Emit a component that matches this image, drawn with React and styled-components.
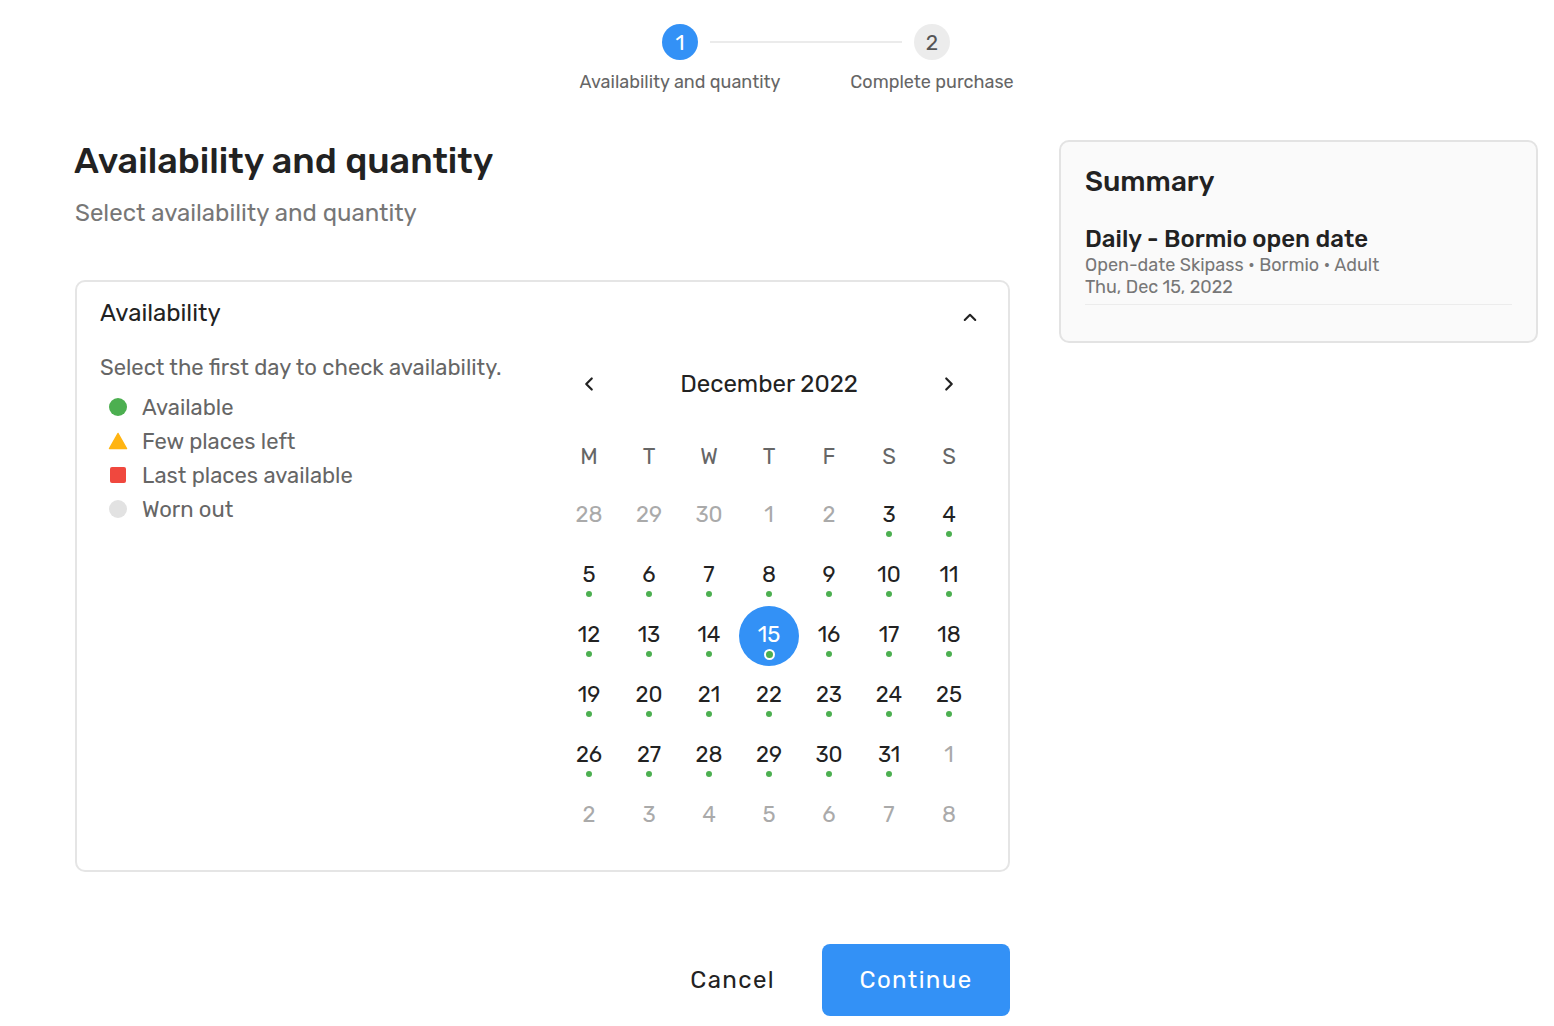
import React from "react";
import styled, { createGlobalStyle } from "styled-components";

const Global = createGlobalStyle`
  * { box-sizing: border-box; }
  body {
    margin: 0;
    background: #fff;
    font-family: Rubik, Inter, "Noto Sans", sans-serif;
    color: #222;
  }
`;

const Page = styled.div`
  width: 1554px;
  padding-top: 24px;
`;

const Stepper = styled.div`
  display: flex;
  margin-left: 554px;
`;

const Step = styled.div`
  width: 252px;
  display: flex;
  flex-direction: column;
  align-items: center;
`;

const Track = styled.div`
  width: 100%;
  display: flex;
  align-items: center;
`;

const Line = styled.div`
  flex: 1;
  height: 2px;
  background: ${(p) => (p.$show ? "#ebebeb" : "transparent")};
  margin: ${(p) => (p.$side === "left" ? "0 12px 0 0" : "0 0 0 12px")};
`;

const Circle = styled.div`
  width: 36px;
  height: 36px;
  border-radius: 50%;
  display: flex;
  align-items: center;
  justify-content: center;
  font-size: 21px;
  background: ${(p) => (p.$active ? "#3391f6" : "#ececec")};
  color: ${(p) => (p.$active ? "#fff" : "#555")};
`;

const StepLabel = styled.div`
  margin-top: 11px;
  font-size: 18px;
  line-height: 22px;
  color: #666;
  white-space: nowrap;
`;

const Main = styled.div`
  display: grid;
  grid-template-columns: 935px 479px;
  column-gap: 49px;
  padding-left: 75px;
  margin-top: 46px;
  align-items: start;
`;

const LeftCol = styled.div`
  display: flex;
  flex-direction: column;
`;

const Title = styled.h1`
  margin: 0 0 0 -1px;
  font-size: 36px;
  line-height: 44px;
  font-weight: 500;
  color: #222;
`;

const Subtitle = styled.div`
  margin-top: 15px;
  font-size: 24px;
  line-height: 30px;
  color: #777;
`;

const Card = styled.div`
  margin-top: 52px;
  border: 2px solid #e5e5e5;
  border-radius: 10px;
  padding: 16px 29px 24px 23px;
`;

const CardHeader = styled.div`
  display: flex;
  align-items: center;
  justify-content: space-between;
  height: 30px;
`;

const CardTitle = styled.div`
  font-size: 24px;
  line-height: 30px;
  color: #222;
`;

const Body = styled.div`
  display: flex;
  margin-top: 26px;
`;

const Legend = styled.div`
  flex: 1;
  display: flex;
  flex-direction: column;
`;

const Hint = styled.div`
  font-size: 22px;
  line-height: 28px;
  color: #666;
  margin-bottom: 8px;
`;

const LegendRow = styled.div`
  display: flex;
  align-items: center;
  height: 34px;
  padding-left: 8px;
  font-size: 22px;
  color: #666;
`;

const IconBox = styled.span`
  width: 20px;
  height: 20px;
  display: flex;
  align-items: center;
  justify-content: center;
  margin-right: 14px;
`;

const Dot = styled.span`
  width: 18px;
  height: 18px;
  border-radius: 50%;
  background: ${(p) => p.$color};
`;

const Square = styled.span`
  width: 16px;
  height: 16px;
  border-radius: 2px;
  background: #f0483e;
`;

const Calendar = styled.div`
  width: 420px;
  display: flex;
  flex-direction: column;
`;

const CalHeader = styled.div`
  display: grid;
  grid-template-columns: 60px 1fr 60px;
  align-items: center;
  height: 44px;
  margin-top: 8px;
`;

const NavBtn = styled.button`
  border: 0;
  background: none;
  padding: 0;
  display: flex;
  align-items: center;
  justify-content: center;
  color: #222;
  cursor: pointer;
  margin-top: ${(p) => p.$offset || 0}px;
`;

const Month = styled.div`
  text-align: center;
  font-size: 24px;
  color: #222;
`;

const Grid = styled.div`
  display: grid;
  grid-template-columns: repeat(7, 60px);
  grid-auto-rows: 60px;
  margin-top: 20px;
`;

const Weekday = styled.div`
  display: flex;
  align-items: center;
  justify-content: center;
  font-size: 22px;
  color: #666;
`;

const DayCell = styled.div`
  display: flex;
  flex-direction: column;
  align-items: center;
  padding-top: 17px;
  border-radius: 50%;
  background: ${(p) => (p.$selected ? "#3391f6" : "transparent")};
  color: ${(p) => (p.$selected ? "#fff" : p.$muted ? "#aaa" : "#222")};
`;

const DayNum = styled.span`
  font-size: 22px;
  line-height: 24px;
`;

const AvailDot = styled.span`
  margin-top: ${(p) => (p.$selected ? "2px" : "4px")};
  width: ${(p) => (p.$selected ? "11px" : "6px")};
  height: ${(p) => (p.$selected ? "11px" : "6px")};
  border-radius: 50%;
  background: #4caf50;
  border: ${(p) => (p.$selected ? "2px solid #fff" : "0")};
`;

const Footer = styled.div`
  display: flex;
  justify-content: flex-end;
  align-items: center;
  margin-top: 72px;
  gap: 23px;
`;

const TextButton = styled.button`
  border: 0;
  background: none;
  font-family: inherit;
  font-size: 24px;
  letter-spacing: 1.4px;
  color: #222;
  padding: 0 24px;
  height: 72px;
  cursor: pointer;
`;

const PrimaryButton = styled.button`
  border: 0;
  background: #3391f6;
  color: #fff;
  font-family: inherit;
  font-size: 24px;
  letter-spacing: 1.4px;
  width: 188px;
  height: 72px;
  border-radius: 8px;
  cursor: pointer;
`;

const Summary = styled.div`
  margin-top: 1px;
  background: #fafafa;
  border: 2px solid #e3e3e3;
  border-radius: 10px;
  padding: 22px 24px 36px 24px;
`;

const SummaryTitle = styled.div`
  font-size: 28px;
  line-height: 36px;
  font-weight: 500;
  color: #222;
`;

const ItemTitle = styled.div`
  margin-top: 24px;
  font-size: 24px;
  line-height: 30px;
  font-weight: 500;
  color: #222;
`;

const ItemMeta = styled.div`
  font-size: 18px;
  line-height: 22px;
  color: #777;
`;

const Divider = styled.div`
  margin-top: 6px;
  height: 1px;
  background: #ececec;
`;

const ChevronUp = () => (
  <svg width="18" height="18" viewBox="0 0 24 24" fill="none" stroke="#222" strokeWidth="2.8" strokeLinecap="round" strokeLinejoin="round">
    <polyline points="5 16 12 9 19 16" />
  </svg>
);

const Chevron = ({ dir }) => (
  <svg width="22" height="22" viewBox="0 0 24 24" fill="none" stroke="#222" strokeWidth="2.4" strokeLinecap="round" strokeLinejoin="round">
    {dir === "left" ? <polyline points="15 6 9 12 15 18" /> : <polyline points="9 6 15 12 9 18" />}
  </svg>
);

const Triangle = () => (
  <svg width="20" height="18" viewBox="0 0 20 18">
    <path d="M10 1.5 L18.5 16.5 L1.5 16.5 Z" fill="#ffb412" stroke="#ffb412" strokeWidth="1.5" strokeLinejoin="round" />
  </svg>
);

const weekdays = ["M", "T", "W", "T", "F", "S", "S"];

const buildDays = () => {
  const days = [];
  [28, 29, 30].forEach((d) => days.push({ d, muted: true }));
  [1, 2].forEach((d) => days.push({ d, muted: true }));
  for (let d = 3; d <= 31; d++) days.push({ d, dot: true, selected: d === 15 });
  [1, 2, 3, 4, 5, 6, 7, 8].forEach((d) => days.push({ d, muted: true }));
  return days;
};

export default function App() {
  const days = buildDays();
  return (
    <>
      <Global />
      <Page>
        <Stepper>
          <Step>
            <Track>
              <Line $side="left" />
              <Circle $active>1</Circle>
              <Line $side="right" $show />
            </Track>
            <StepLabel>Availability and quantity</StepLabel>
          </Step>
          <Step>
            <Track>
              <Line $side="left" $show />
              <Circle>2</Circle>
              <Line $side="right" />
            </Track>
            <StepLabel>Complete purchase</StepLabel>
          </Step>
        </Stepper>

        <Main>
          <LeftCol>
            <Title>Availability and quantity</Title>
            <Subtitle>Select availability and quantity</Subtitle>

            <Card>
              <CardHeader>
                <CardTitle>Availability</CardTitle>
                <NavBtn aria-label="collapse" $offset={8}>
                  <ChevronUp />
                </NavBtn>
              </CardHeader>
              <Body>
                <Legend>
                  <Hint>Select the first day to check availability.</Hint>
                  <LegendRow>
                    <IconBox><Dot $color="#4caf50" /></IconBox>
                    Available
                  </LegendRow>
                  <LegendRow>
                    <IconBox><Triangle /></IconBox>
                    Few places left
                  </LegendRow>
                  <LegendRow>
                    <IconBox><Square /></IconBox>
                    Last places available
                  </LegendRow>
                  <LegendRow>
                    <IconBox><Dot $color="#e2e2e2" /></IconBox>
                    Worn out
                  </LegendRow>
                </Legend>
                <Calendar>
                  <CalHeader>
                    <NavBtn aria-label="previous"><Chevron dir="left" /></NavBtn>
                    <Month>December 2022</Month>
                    <NavBtn aria-label="next"><Chevron dir="right" /></NavBtn>
                  </CalHeader>
                  <Grid>
                    {weekdays.map((w, i) => (
                      <Weekday key={"w" + i}>{w}</Weekday>
                    ))}
                    {days.map((day, i) => (
                      <DayCell key={i} $muted={day.muted} $selected={day.selected}>
                        <DayNum>{day.d}</DayNum>
                        {day.dot && <AvailDot $selected={day.selected} />}
                      </DayCell>
                    ))}
                  </Grid>
                </Calendar>
              </Body>
            </Card>

            <Footer>
              <TextButton>Cancel</TextButton>
              <PrimaryButton>Continue</PrimaryButton>
            </Footer>
          </LeftCol>

          <Summary>
            <SummaryTitle>Summary</SummaryTitle>
            <ItemTitle>Daily - Bormio open date</ItemTitle>
            <ItemMeta>Open-date Skipass • Bormio • Adult</ItemMeta>
            <ItemMeta>Thu, Dec 15, 2022</ItemMeta>
            <Divider />
          </Summary>
        </Main>
      </Page>
    </>
  );
}
